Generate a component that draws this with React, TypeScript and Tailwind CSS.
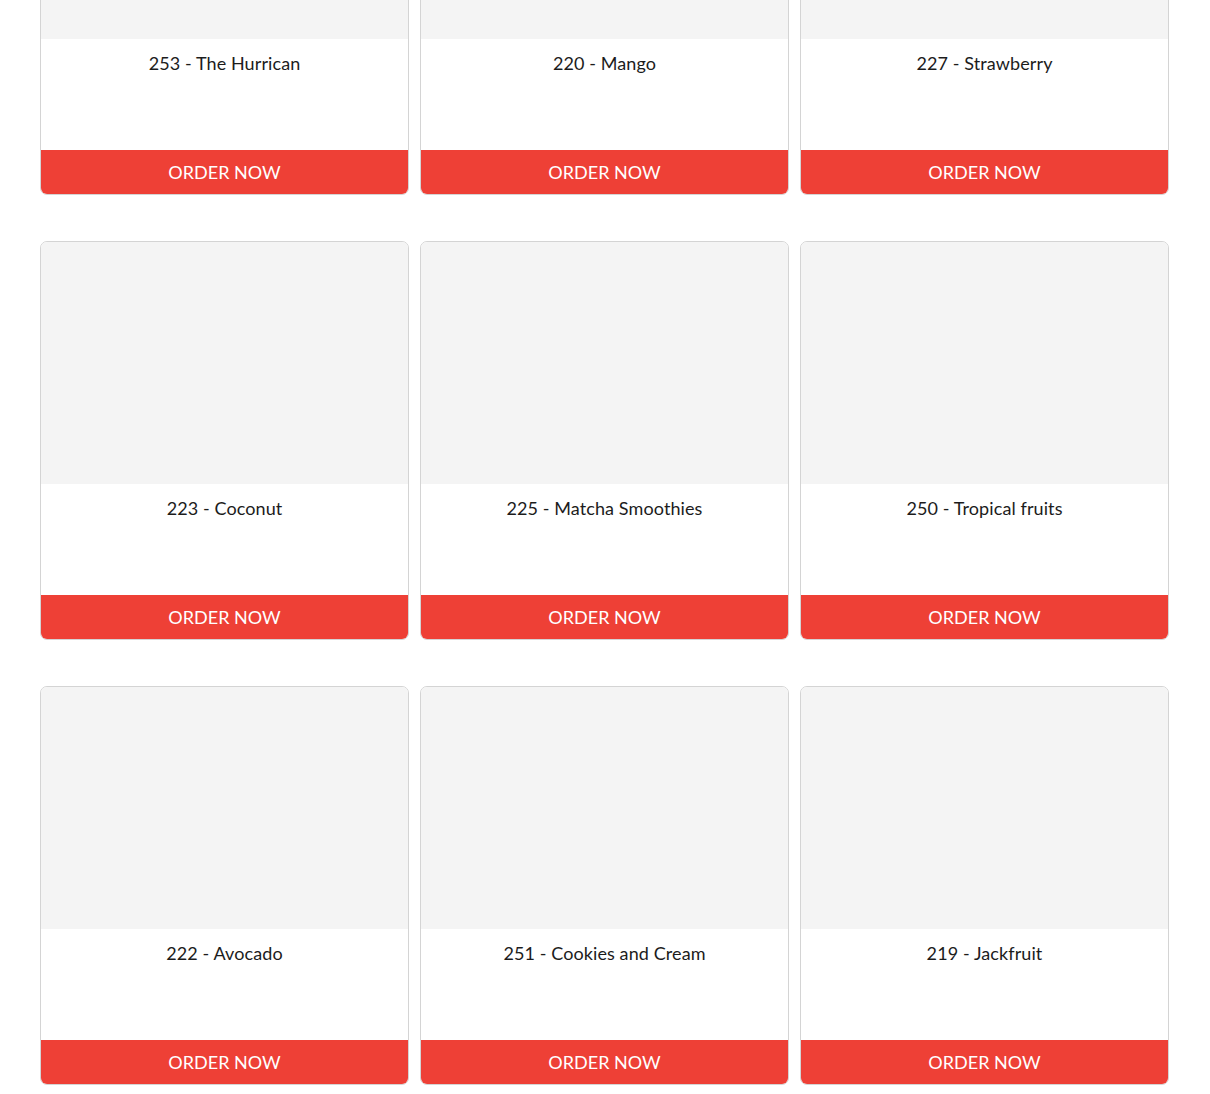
const items = [
    "253 - The Hurrican",
    "220 - Mango",
    "227 - Strawberry",
    "223 - Coconut",
    "225 - Matcha Smoothies",
    "250 - Tropical fruits",
    "222 - Avocado",
    "251 - Cookies and Cream",
    "219 - Jackfruit",
];

const ProductCard = ({ name }: { name: string }) => {
    return (
        <div className="flex flex-col h-[399px] border border-[#d4d4d4] rounded-[7px] overflow-hidden bg-white">
            <div className="h-[242px] bg-[#f4f4f4] shrink-0" />
            <div className="flex-1 pt-[11px] text-center text-[18px] text-[#1c1c1c] tracking-[0.1px]">
                {name}
            </div>
            <button className="h-[44px] shrink-0 bg-[#ee4036] text-white text-[18px] uppercase">
                Order Now
            </button>
        </div>
    );
};

export default function App() {
    return (
        <div
            className="bg-white min-h-[1094px] overflow-hidden"
            style={{ fontFamily: "Lato, 'Open Sans', sans-serif" }}
        >
            <div className="mt-[-204px] pl-[40px] pr-[41px] grid grid-cols-3 gap-x-[11px] gap-y-[46px]">
                {items.map((name) => (
                    <ProductCard key={name} name={name} />
                ))}
            </div>
        </div>
    );
}
